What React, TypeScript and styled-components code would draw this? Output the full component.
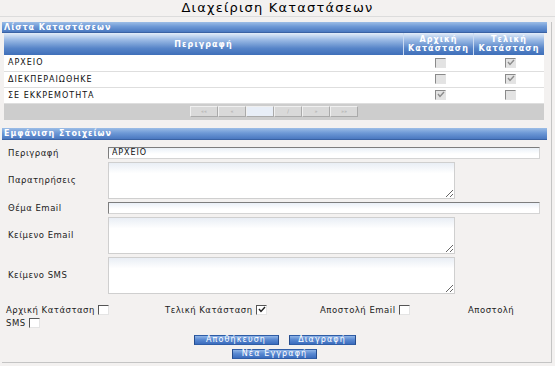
import React from 'react';
import styled, { createGlobalStyle } from 'styled-components';

const GlobalStyle = createGlobalStyle`
  html, body {
    margin: 0;
    padding: 0;
    background: #f3f1f0;
  }
  body {
    font-family: "DejaVu Sans", Verdana, sans-serif;
    font-size: 8.5px;
    letter-spacing: 0.5px;
    color: #111;
  }
`;

const Page = styled.div`
  width: 555px;
  height: 366px;
  overflow: hidden;
`;

const Title = styled.div`
  height: 16px;
  line-height: 16px;
  border-bottom: 1px solid #dcdcdc;
  text-align: center;
  font-size: 13px;
  letter-spacing: 1.2px;
  color: #000;
`;

const Panel = styled.div`
  margin: 5px 0 0 2px;
  width: 549px;
  border-right: 1px solid #c4c4c4;
  border-bottom: 1px solid #c4c4c4;
`;

const SectionBar = styled.div<{ $top?: number; $h?: number }>`
  width: 545px;
  height: ${p => p.$h || 11}px;
  line-height: ${p => p.$h || 11}px;
  margin-top: ${p => p.$top || 0}px;
  padding-left: 2px;
  box-sizing: border-box;
  background: linear-gradient(#9cbde6 0%, #6e99d6 45%, #4a78c0 100%);
  border-bottom: 1px solid #3a62a4;
  color: #fff;
  font-weight: bold;
  font-size: 8px;
  letter-spacing: 0.95px;
`;

const GridWrap = styled.div`
  padding-left: 2px;
  width: 540px;
`;

const Table = styled.table`
  width: 540px;
  border-collapse: collapse;
  table-layout: fixed;
  background: #fff;
`;

const HeadCell = styled.th<{ $w?: number }>`
  width: ${p => (p.$w ? `${p.$w}px` : 'auto')};
  height: 22px;
  padding: 0;
  background: linear-gradient(#e4edf9 0%, #9dbce6 30%, #5684c8 70%, #3f6fb9 100%);
  border-left: 1px solid #c9daf1;
  color: #fff;
  font-weight: bold;
  font-size: 8px;
  line-height: 9px;
  letter-spacing: 1.1px;
  text-align: center;
  white-space: nowrap;
  &:first-child {
    border-left: none;
  }
`;

const Row = styled.tr`
  height: 16px;
  border-bottom: 1px solid #dedede;
`;

const Cell = styled.td<{ $center?: boolean }>`
  padding: 0 0 0 4px;
  text-align: ${p => (p.$center ? 'center' : 'left')};
  font-size: 8px;
  letter-spacing: 1px;
  color: #111;
`;

const Pager = styled.div`
  height: 16px;
  background: #cdcdcd;
  display: flex;
  justify-content: center;
  align-items: center;
`;

const PagerBtn = styled.span<{ $input?: boolean }>`
  width: 26px;
  height: 9px;
  line-height: 9px;
  border: 1px solid;
  border-color: #f0f0f0 #aaa #aaa #f0f0f0;
  background: ${p => (p.$input ? '#e8eef7' : '#d9d9d9')};
  color: #a9a9a9;
  font-size: 5px;
  letter-spacing: 0;
  text-align: center;
`;

const Box = styled.span<{ $disabled?: boolean }>`
  display: inline-block;
  position: relative;
  width: 9px;
  height: 8px;
  vertical-align: middle;
  border-top: 1px solid ${p => (p.$disabled ? '#8a8a8a' : '#555')};
  border-left: 1px solid ${p => (p.$disabled ? '#8a8a8a' : '#555')};
  border-right: 1px solid #e4e4e4;
  border-bottom: 1px solid #e4e4e4;
  background: ${p => (p.$disabled ? '#e3e3e3' : '#fff')};
  svg {
    position: absolute;
    left: 1px;
    top: 0;
  }
`;

const Check: React.FC<{ checked?: boolean; disabled?: boolean }> = ({ checked, disabled }) => (
  <Box $disabled={disabled}>
    {checked && (
      <svg width="8" height="7" viewBox="0 0 8 7">
        <polyline
          points="1,3 3,5.5 7,1"
          fill="none"
          stroke={disabled ? '#8c8c8c' : '#222'}
          strokeWidth="1.4"
        />
      </svg>
    )}
  </Box>
);

const Form = styled.div`
  display: grid;
  grid-template-columns: 106px 432px;
  align-items: center;
  row-gap: 3px;
  padding-top: 7px;
`;

const Label = styled.label`
  padding-left: 6px;
  color: #222;
`;

const Input = styled.input`
  box-sizing: border-box;
  width: 432px;
  height: 12px;
  margin: 0;
  padding: 0 3px;
  border: 1px solid;
  border-color: #7d7d7d #d4d4d4 #d4d4d4 #7d7d7d;
  background: linear-gradient(#eaf0f7, #fff 60%);
  font-family: "DejaVu Sans", Verdana, sans-serif;
  font-size: 8px;
  letter-spacing: 0.9px;
  color: #111;
  outline: none;
`;

const TextArea = styled.textarea`
  box-sizing: border-box;
  width: 347px;
  height: 37px;
  margin: 0;
  padding: 2px;
  border: 1px solid #cfcfcf;
  background: linear-gradient(#e9eef5, #fff 30%);
  font-family: "DejaVu Sans", Verdana, sans-serif;
  font-size: 8px;
  display: block;
  outline: none;
`;

const Options = styled.div`
  margin-top: 10px;
  padding: 0 12px 0 4px;
  line-height: 13px;
  color: #222;
`;

const Option = styled.span<{ $w: number }>`
  display: inline-block;
  width: ${p => p.$w}px;
  white-space: nowrap;
`;

const NoWrap = styled.span`
  white-space: nowrap;
`;

const ButtonBar = styled.div`
  width: 170px;
  margin: 5px auto 0;
  position: relative;
  left: -2px;
  display: flex;
  flex-wrap: wrap;
  justify-content: center;
  gap: 4px 10px;
  padding-bottom: 3px;
`;

const Button = styled.button<{ $w: number }>`
  width: ${p => p.$w}px;
  height: 10px;
  padding: 0;
  border: 1px solid #2f5da6;
  border-left-color: #254c8c;
  border-right-color: #254c8c;
  background: linear-gradient(#8fb4e6 0%, #5a8ad2 45%, #3b6cbd 100%);
  color: #fff;
  font-family: "DejaVu Sans", Verdana, sans-serif;
  font-size: 8px;
  line-height: 8px;
  letter-spacing: 1.1px;
`;

const rows = [
  { name: 'ΑΡΧΕΙΟ', start: false, end: true },
  { name: 'ΔΙΕΚΠΕΡΑΙΩΘΗΚΕ', start: false, end: true },
  { name: 'ΣΕ ΕΚΚΡΕΜΟΤΗΤΑ', start: true, end: false },
];

const App: React.FC = () => (
  <Page>
    <GlobalStyle />
    <Title>Διαχείριση Καταστάσεων</Title>
    <Panel>
      <SectionBar>Λίστα Καταστάσεων</SectionBar>
      <GridWrap>
        <Table>
          <thead>
            <tr>
              <HeadCell>Περιγραφή</HeadCell>
              <HeadCell $w={69}>Αρχική<br />Κατάσταση</HeadCell>
              <HeadCell $w={70}>Τελική<br />Κατάσταση</HeadCell>
            </tr>
          </thead>
          <tbody>
            {rows.map(r => (
              <Row key={r.name}>
                <Cell>{r.name}</Cell>
                <Cell $center><Check disabled checked={r.start} /></Cell>
                <Cell $center><Check disabled checked={r.end} /></Cell>
              </Row>
            ))}
          </tbody>
        </Table>
        <Pager>
          <PagerBtn>««</PagerBtn>
          <PagerBtn>«</PagerBtn>
          <PagerBtn $input />
          <PagerBtn>/</PagerBtn>
          <PagerBtn>»</PagerBtn>
          <PagerBtn>»»</PagerBtn>
        </Pager>
      </GridWrap>

      <SectionBar $top={8} $h={12}>Εμφάνιση Στοιχείων</SectionBar>
      <Form>
        <Label>Περιγραφή</Label>
        <Input defaultValue="ΑΡΧΕΙΟ" />
        <Label>Παρατηρήσεις</Label>
        <TextArea />
        <Label>Θέμα Email</Label>
        <Input />
        <Label>Κείμενο Email</Label>
        <TextArea />
        <Label>Κείμενο SMS</Label>
        <TextArea />
      </Form>

      <Options>
        <Option $w={159}>Αρχική Κατάσταση <Check /></Option>
        <Option $w={155}>Τελική Κατάσταση <Check checked /></Option>
        <Option $w={148}>Αποστολή Email <Check /></Option>
        Αποστολή <NoWrap>SMS <Check /></NoWrap>
      </Options>

      <ButtonBar>
        <Button $w={85}>Αποθήκευση</Button>
        <Button $w={67}>Διαγραφή</Button>
        <Button $w={85}>Νέα Εγγραφή</Button>
      </ButtonBar>
    </Panel>
  </Page>
);

export default App;
